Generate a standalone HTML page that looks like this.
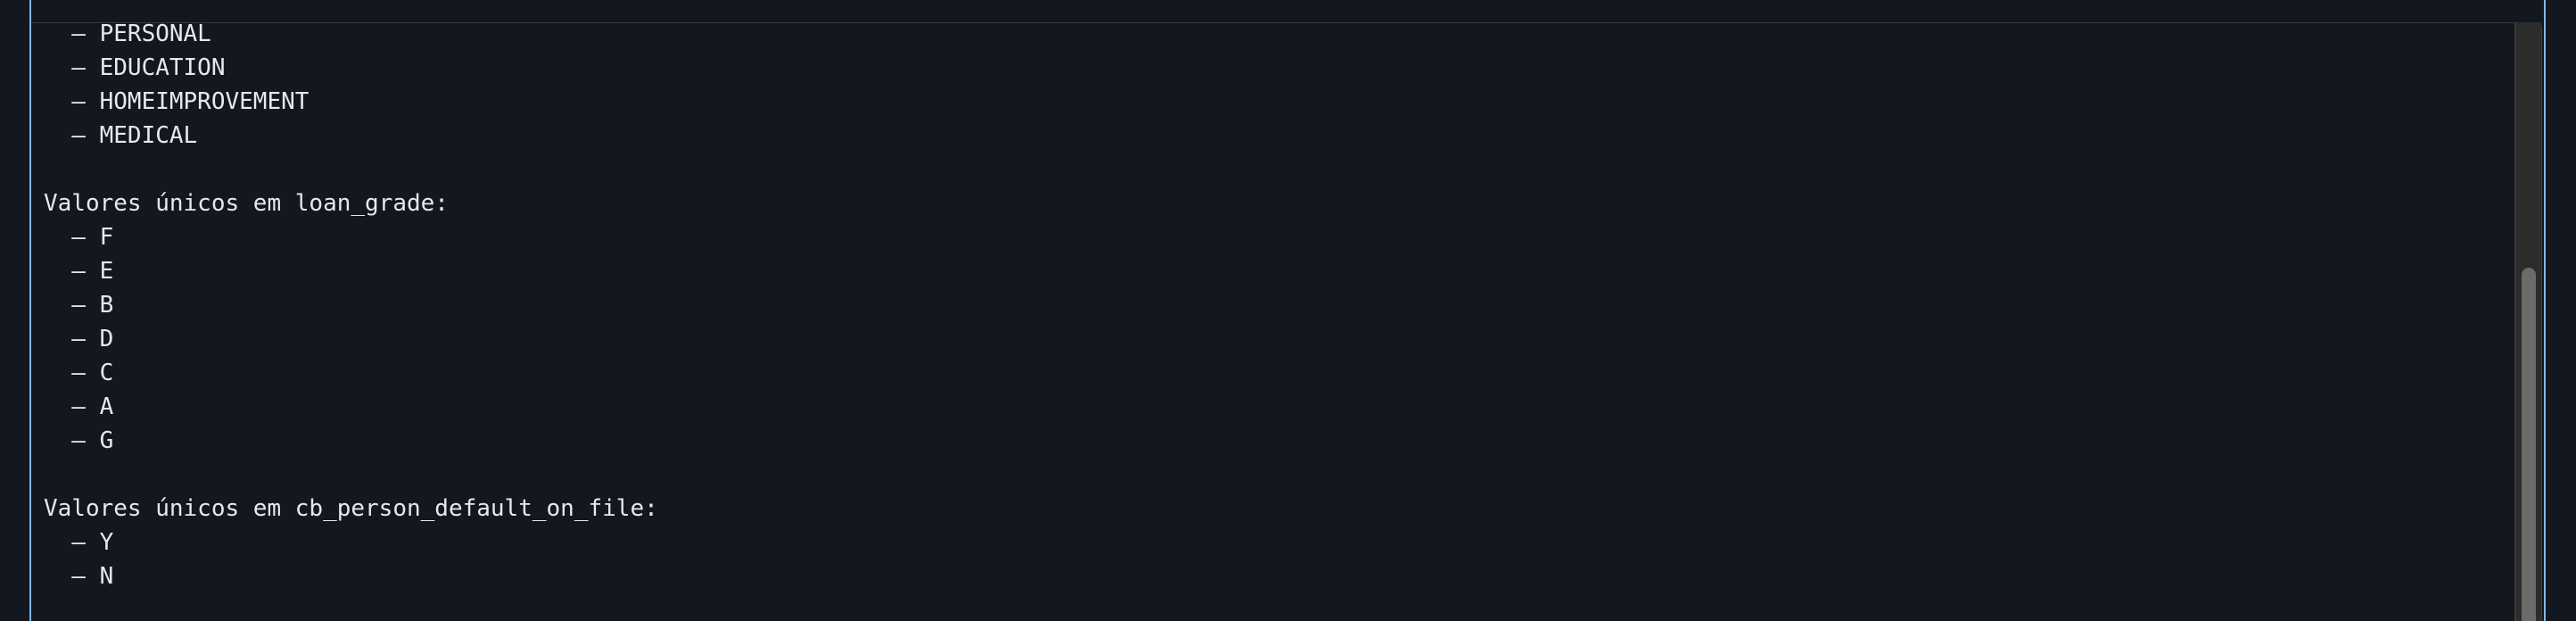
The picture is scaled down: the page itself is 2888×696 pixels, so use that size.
<!DOCTYPE html>
<html><head><meta charset="utf-8"><style>
html,body{margin:0;padding:0;width:2888px;height:696px;overflow:hidden;}
body{background:#121720;position:relative;
font-family:"DejaVu Sans Mono","Liberation Mono",monospace;}
.bl{position:absolute;top:0;width:2px;height:696px;background:#7fb8ea;}
.box{position:absolute;left:35px;top:25px;width:2813px;height:671px;border-top:1px solid #3a3d42;border-right:2px solid #3a3d42;border-top-right-radius:6px;overflow:hidden;}
.txt{position:absolute;left:14px;top:-7px;color:#e8e8e8;font-size:26px;line-height:38px;white-space:pre;}
.track{position:absolute;left:2819px;top:25px;width:28px;height:671px;background:#2c2c2c;border-left:2px solid #3a3a3a;}
.thumb{position:absolute;left:2827px;top:300px;width:16px;height:396px;background:#6b6b6b;border-radius:8px 8px 0 0;}
</style></head><body>
<div class="bl" style="left:33px"></div>
<div class="bl" style="left:2852px"></div>
<div class="box"><div class="txt">  – PERSONAL
  – EDUCATION
  – HOMEIMPROVEMENT
  – MEDICAL

Valores únicos em loan_grade:
  – F
  – E
  – B
  – D
  – C
  – A
  – G

Valores únicos em cb_person_default_on_file:
  – Y
  – N</div></div>
<div class="track"></div>
<div class="thumb"></div>
</body></html>
